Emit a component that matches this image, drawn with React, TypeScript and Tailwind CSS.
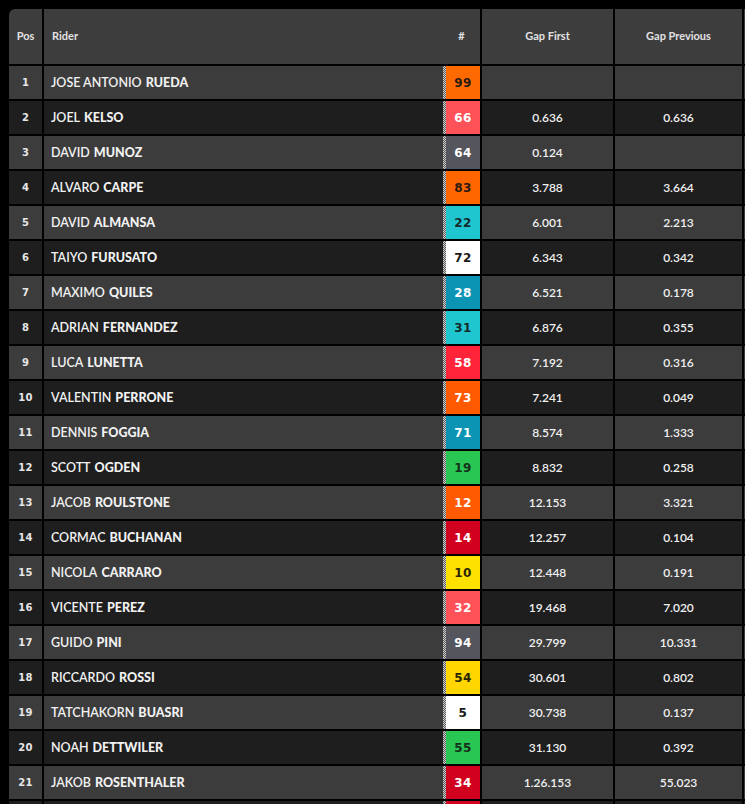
import React from 'react';

type Row = {
    pos: number;
    first: string;
    last: string;
    num: string;
    bg: string;
    fg: string;
    gapFirst: string;
    gapPrev: string;
};

const rows: Row[] = [
    { pos: 1, first: 'JOSE ANTONIO', last: 'RUEDA', num: '99', bg: 'bg-[#ff6a00]', fg: 'text-[#2a1a10]', gapFirst: '', gapPrev: '' },
    { pos: 2, first: 'JOEL', last: 'KELSO', num: '66', bg: 'bg-[#ff5158]', fg: 'text-white', gapFirst: '0.636', gapPrev: '0.636' },
    { pos: 3, first: 'DAVID', last: 'MUNOZ', num: '64', bg: 'bg-[#55555d]', fg: 'text-white', gapFirst: '0.124', gapPrev: '' },
    { pos: 4, first: 'ALVARO', last: 'CARPE', num: '83', bg: 'bg-[#ff6600]', fg: 'text-[#2a1a10]', gapFirst: '3.788', gapPrev: '3.664' },
    { pos: 5, first: 'DAVID', last: 'ALMANSA', num: '22', bg: 'bg-[#1fc6d0]', fg: 'text-[#15292b]', gapFirst: '6.001', gapPrev: '2.213' },
    { pos: 6, first: 'TAIYO', last: 'FURUSATO', num: '72', bg: 'bg-white', fg: 'text-[#1a1a1a]', gapFirst: '6.343', gapPrev: '0.342' },
    { pos: 7, first: 'MAXIMO', last: 'QUILES', num: '28', bg: 'bg-[#0c94b4]', fg: 'text-white', gapFirst: '6.521', gapPrev: '0.178' },
    { pos: 8, first: 'ADRIAN', last: 'FERNANDEZ', num: '31', bg: 'bg-[#1fc6d0]', fg: 'text-[#15292b]', gapFirst: '6.876', gapPrev: '0.355' },
    { pos: 9, first: 'LUCA', last: 'LUNETTA', num: '58', bg: 'bg-[#ff2439]', fg: 'text-white', gapFirst: '7.192', gapPrev: '0.316' },
    { pos: 10, first: 'VALENTIN', last: 'PERRONE', num: '73', bg: 'bg-[#ff5a00]', fg: 'text-white', gapFirst: '7.241', gapPrev: '0.049' },
    { pos: 11, first: 'DENNIS', last: 'FOGGIA', num: '71', bg: 'bg-[#0c94b4]', fg: 'text-white', gapFirst: '8.574', gapPrev: '1.333' },
    { pos: 12, first: 'SCOTT', last: 'OGDEN', num: '19', bg: 'bg-[#2ac653]', fg: 'text-[#14301c]', gapFirst: '8.832', gapPrev: '0.258' },
    { pos: 13, first: 'JACOB', last: 'ROULSTONE', num: '12', bg: 'bg-[#ff5a00]', fg: 'text-white', gapFirst: '12.153', gapPrev: '3.321' },
    { pos: 14, first: 'CORMAC', last: 'BUCHANAN', num: '14', bg: 'bg-[#d2001f]', fg: 'text-white', gapFirst: '12.257', gapPrev: '0.104' },
    { pos: 15, first: 'NICOLA', last: 'CARRARO', num: '10', bg: 'bg-[#ffe100]', fg: 'text-[#2a2600]', gapFirst: '12.448', gapPrev: '0.191' },
    { pos: 16, first: 'VICENTE', last: 'PEREZ', num: '32', bg: 'bg-[#ff5158]', fg: 'text-white', gapFirst: '19.468', gapPrev: '7.020' },
    { pos: 17, first: 'GUIDO', last: 'PINI', num: '94', bg: 'bg-[#55555d]', fg: 'text-white', gapFirst: '29.799', gapPrev: '10.331' },
    { pos: 18, first: 'RICCARDO', last: 'ROSSI', num: '54', bg: 'bg-[#ffd600]', fg: 'text-[#2a2600]', gapFirst: '30.601', gapPrev: '0.802' },
    { pos: 19, first: 'TATCHAKORN', last: 'BUASRI', num: '5', bg: 'bg-white', fg: 'text-[#1a1a1a]', gapFirst: '30.738', gapPrev: '0.137' },
    { pos: 20, first: 'NOAH', last: 'DETTWILER', num: '55', bg: 'bg-[#2ac653]', fg: 'text-[#14301c]', gapFirst: '31.130', gapPrev: '0.392' },
    { pos: 21, first: 'JAKOB', last: 'ROSENTHALER', num: '34', bg: 'bg-[#d2001f]', fg: 'text-white', gapFirst: '1.26.153', gapPrev: '55.023' },
];

const numFont = "font-['DejaVu_Sans',sans-serif]";
const cols = 'grid grid-cols-[33px_436px_131px_127px_140px] gap-x-[2px]';

function Stripe() {
    return (
        <div className="w-[3px] self-stretch bg-[conic-gradient(#cfcfcf_25%,#5a5a5a_0_50%,#cfcfcf_0_75%,#5a5a5a_0)] bg-[length:2px_2px]" />
    );
}

function RiderRow({ r }: { r: Row }) {
    const bg = r.pos % 2 === 1 ? 'bg-[#3c3c3c]' : 'bg-[#1e1e1e]';
    return (
        <div className={`${cols} h-[33px]`}>
            <div className={`${bg} flex items-center justify-center text-[10px] font-bold text-[#e6e6e6] tracking-wide ${numFont}`}>
                {r.pos}
            </div>
            <div className={`${bg} flex items-stretch`}>
                <div className="flex-1 flex items-center pl-[7px] text-[12.5px] leading-[16px] text-[#f2f2f2]">
                    <span className="font-semibold">{r.first}</span>
                    <span className="font-black ml-[4px]">{r.last}</span>
                </div>
                <Stripe />
                <div className={`w-[34px] ${r.bg} ${r.fg} flex items-center justify-center pt-[1px] text-[12px] font-semibold tracking-[0.5px] ${numFont}`}>
                    {r.num}
                </div>
            </div>
            <div className={`${bg} flex items-center justify-center text-[12px] leading-[16px] font-semibold text-[#f0f0f0]`}>{r.gapFirst}</div>
            <div className={`${bg} flex items-center justify-center text-[12px] leading-[16px] font-semibold text-[#f0f0f0]`}>{r.gapPrev}</div>
            <div className={bg} />
        </div>
    );
}

export default function App() {
    return (
        <div className="h-[804px] w-[745px] overflow-hidden bg-black font-['Lato',sans-serif]">
            <div className="pt-[9px] pl-[9px] w-[1000px] flex flex-col gap-y-[2px]">
                <div className={`${cols} h-[55px] text-[11px] font-bold text-[#e2e2e2]`}>
                    <div className="bg-[#3d3d3d] rounded-tl-[6px] flex items-center justify-center">Pos</div>
                    <div className="bg-[#3d3d3d] flex items-center">
                        <div className="flex-1 pl-[8px]">Rider</div>
                        <div className="w-[37px] text-center">#</div>
                    </div>
                    <div className="bg-[#3d3d3d] flex items-center justify-center">Gap First</div>
                    <div className="bg-[#3d3d3d] flex items-center justify-center">Gap Previous</div>
                    <div className="bg-[#3d3d3d]" />
                </div>
                {rows.map((r) => (
                    <RiderRow key={r.pos} r={r} />
                ))}
                <div className={`${cols} h-[33px]`}>
                    <div className="bg-[#1e1e1e]" />
                    <div className="bg-[#1e1e1e] flex items-stretch">
                        <div className="flex-1" />
                        <Stripe />
                        <div className="w-[34px] bg-[#d2001f]" />
                    </div>
                    <div className="bg-[#1e1e1e]" />
                    <div className="bg-[#1e1e1e]" />
                    <div className="bg-[#1e1e1e]" />
                </div>
            </div>
        </div>
    );
}
